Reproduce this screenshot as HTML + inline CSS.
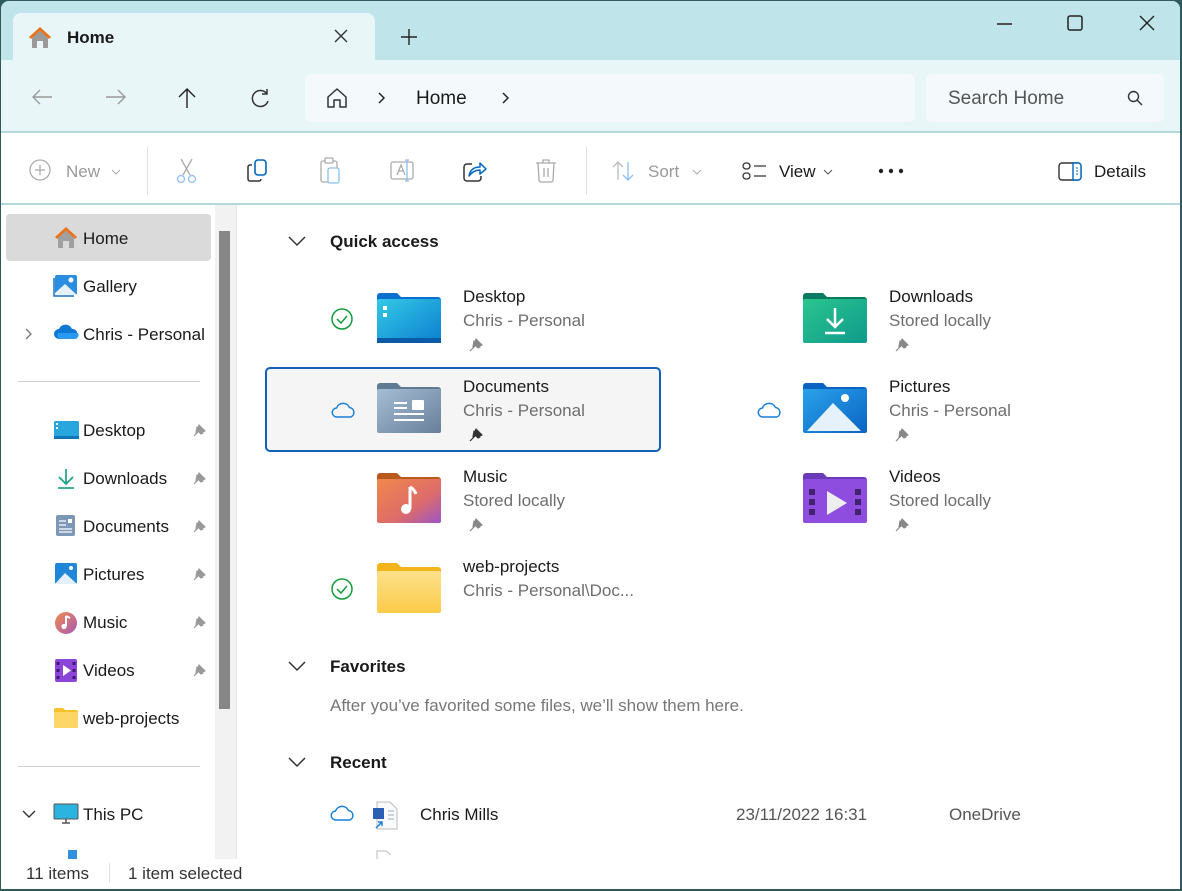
<!DOCTYPE html>
<html><head><meta charset="utf-8"><style>
*{margin:0;padding:0;box-sizing:border-box}
body{width:1182px;height:891px;overflow:hidden;background:#2f5a5e;font-family:"Liberation Sans",sans-serif;color:#1a1a1a;position:relative}
.a{position:absolute}
.win{position:absolute;left:1px;top:1px;width:1179px;height:888px;background:#fff;border-radius:8px 8px 0 0;overflow:hidden}
.t{font-size:17px;white-space:nowrap}
.g{color:#6e6e6e}
.lg{color:#a0a0a0}
svg{position:absolute;overflow:visible}
</style></head><body>
<div class="win">
<!-- title bar -->
<div class="a" style="left:0;top:0;width:1179px;height:59px;background:#bfe5ea"></div>
<div class="a" style="left:12px;top:12px;width:362px;height:48px;background:#e9f6f8;border-radius:8px 8px 0 0"></div>
<svg style="left:26px;top:24px" width="26" height="24"><path d="M13 2 L2 12 L4 14 L13 6 L22 14 L24 12 Z" fill="#e8731c"/><path d="M5 13 L13 6 L21 13 V23 H16 V16 H10 V23 H5Z" fill="#9a9a9a"/></svg>
<div class="a t" style="left:66px;top:27px;font-weight:bold;font-size:17px">Home</div>
<svg style="left:333px;top:28px" width="14" height="14"><path d="M1 1L13 13M13 1L1 13" stroke="#333" stroke-width="1.4"/></svg>
<svg style="left:400px;top:28px" width="16" height="16"><path d="M8 0V16M0 8H16" stroke="#222" stroke-width="1.4"/></svg>
<svg style="left:996px;top:22px" width="16" height="2"><path d="M0 1H15" stroke="#222" stroke-width="1.4"/></svg>
<svg style="left:1066px;top:14px" width="16" height="16"><rect x="1" y="1" width="14" height="14" rx="2" fill="none" stroke="#222" stroke-width="1.5"/></svg>
<svg style="left:1138px;top:14px" width="16" height="16"><path d="M1 1L15 15M15 1L1 15" stroke="#222" stroke-width="1.4"/></svg>
<!-- nav bar -->
<div class="a" style="left:0;top:59px;width:1179px;height:73px;background:#e9f6f8;border-bottom:2px solid #b4d9dd"></div>
<svg style="left:30px;top:87px" width="22" height="18"><path d="M21 9H2M9 2L2 9L9 16" stroke="#999" stroke-width="1.4" fill="none"/></svg>
<svg style="left:104px;top:87px" width="22" height="18"><path d="M1 9H20M13 2L20 9L13 16" stroke="#999" stroke-width="1.4" fill="none"/></svg>
<svg style="left:176px;top:86px" width="20" height="22"><path d="M10 21V2M2 10L10 2L18 10" stroke="#222" stroke-width="1.4" fill="none"/></svg>
<svg style="left:248px;top:87px" width="22" height="20"><path d="M18 6A8 8 0 1 0 19 13M18 1V6H13" stroke="#333" stroke-width="1.5" fill="none"/></svg>
<div class="a" style="left:304px;top:73px;width:610px;height:48px;background:#f4fafb;border-radius:6px"></div>
<svg style="left:325px;top:86px" width="22" height="22"><path d="M2 10L11 2L20 10V20H14V13H8V20H2Z" stroke="#333" stroke-width="1.5" fill="none" stroke-linejoin="round"/></svg>
<svg style="left:377px;top:91px" width="8" height="12"><path d="M1 1L6 6L1 11" stroke="#222" stroke-width="1.5" fill="none"/></svg>
<div class="a t" style="left:415px;top:87px;font-size:19px">Home</div>
<svg style="left:501px;top:91px" width="8" height="12"><path d="M1 1L6 6L1 11" stroke="#222" stroke-width="1.5" fill="none"/></svg>
<div class="a" style="left:925px;top:73px;width:238px;height:48px;background:#f4fafb;border-radius:6px"></div>
<div class="a t g" style="left:947px;top:87px;font-size:19px;color:#555">Search Home</div>
<svg style="left:1126px;top:89px" width="16" height="16"><circle cx="6.5" cy="6.5" r="5" fill="none" stroke="#333" stroke-width="1.4"/><path d="M10 10L15 15" stroke="#333" stroke-width="1.4"/></svg>
<!-- toolbar -->
<div class="a" style="left:0;top:202px;width:1179px;height:2px;background:#b4d9dd"></div>
<svg style="left:28px;top:158px" width="24" height="24"><circle cx="11" cy="11" r="10" fill="none" stroke="#aaa" stroke-width="1.3"/><path d="M11 6V16M6 11H16" stroke="#aaa" stroke-width="1.3"/></svg>
<div class="a t lg" style="left:65px;top:161px;color:#999">New</div>
<svg style="left:110px;top:168px" width="10" height="6"><path d="M1 1L5 5L9 1" stroke="#aaa" fill="none"/></svg>
<div class="a" style="left:146px;top:146px;width:1px;height:48px;background:#e2e2e2"></div>
<svg style="left:175px;top:157px" width="22" height="26"><path d="M5 1L14 17M16 1L7 17" stroke="#aaa" stroke-width="1.3"/><circle cx="5" cy="21" r="3.5" fill="none" stroke="#8cbff0" stroke-width="1.3"/><circle cx="16" cy="21" r="3.5" fill="none" stroke="#8cbff0" stroke-width="1.3"/></svg>
<svg style="left:246px;top:158px" width="24" height="24"><path d="M5 6H3A2 2 0 0 0 1 8V20A2 2 0 0 0 3 22H12A2 2 0 0 0 14 20" stroke="#333" stroke-width="1.5" fill="none"/><rect x="8" y="1" width="11" height="15" rx="3" fill="none" stroke="#0067c0" stroke-width="1.6"/></svg>
<svg style="left:318px;top:156px" width="24" height="28"><rect x="2" y="4" width="16" height="21" rx="2" fill="none" stroke="#aaa" stroke-width="1.3"/><rect x="6" y="1" width="8" height="5" rx="1" fill="#fff" stroke="#aaa" stroke-width="1.3"/><rect x="9" y="11" width="11" height="15" rx="2" fill="#fff" stroke="#8cbff0" stroke-width="1.3"/></svg>
<svg style="left:389px;top:158px" width="26" height="24"><rect x="1" y="3" width="22" height="17" rx="2" fill="none" stroke="#aaa" stroke-width="1.3"/><path d="M7 16L11 6L15 16M8.5 12H13.5" stroke="#aaa" stroke-width="1.3" fill="none"/><path d="M17 1V22M15 1H19M15 22H19" stroke="#8cbff0" stroke-width="1.3"/></svg>
<svg style="left:462px;top:158px" width="26" height="24"><path d="M9 5H4A3 3 0 0 0 1 8V19A3 3 0 0 0 4 22H15A3 3 0 0 0 18 19V17" stroke="#333" stroke-width="1.5" fill="none"/><path d="M6 17C7 11 11 8 17 8V4L23 10L17 15V11C13 11 9 13 6 17Z" fill="#fff" stroke="#0067c0" stroke-width="1.5" stroke-linejoin="round"/></svg>
<svg style="left:534px;top:158px" width="22" height="24"><path d="M1 4H21M8 4V1H14V4M3 4L4 21A2 2 0 0 0 6 23H16A2 2 0 0 0 18 21L19 4M9 9V18M13 9V18" stroke="#aaa" stroke-width="1.3" fill="none"/></svg>
<div class="a" style="left:585px;top:146px;width:1px;height:48px;background:#e2e2e2"></div>
<svg style="left:611px;top:160px" width="24" height="20"><path d="M6 19V1M1 6L6 1L11 6" stroke="#bbb" stroke-width="1.3" fill="none"/><path d="M16 1V19M11 14L16 19L21 14" stroke="#8cbff0" stroke-width="1.3" fill="none"/></svg>
<div class="a t" style="left:647px;top:161px;color:#999">Sort</div>
<svg style="left:691px;top:168px" width="10" height="6"><path d="M1 1L5 5L9 1" stroke="#aaa" fill="none"/></svg>
<svg style="left:741px;top:161px" width="26" height="20"><rect x="1" y="1" width="7" height="6" rx="3" fill="none" stroke="#333" stroke-width="1.3"/><rect x="1" y="11" width="7" height="6" rx="3" fill="none" stroke="#333" stroke-width="1.3"/><path d="M12 4H24M12 14H24" stroke="#333" stroke-width="1.3"/></svg>
<div class="a t" style="left:778px;top:161px">View</div>
<svg style="left:822px;top:168px" width="10" height="6"><path d="M1 1L5 5L9 1" stroke="#555" fill="none"/></svg>
<svg style="left:877px;top:167px" width="28" height="6"><circle cx="3" cy="3" r="2.2" fill="#222"/><circle cx="13" cy="3" r="2.2" fill="#222"/><circle cx="23" cy="3" r="2.2" fill="#222"/></svg>
<svg style="left:1057px;top:161px" width="26" height="20"><rect x="1" y="1" width="22" height="17" rx="3" fill="none" stroke="#333" stroke-width="1.4"/><path d="M15 1H20A3 3 0 0 1 23 4V15A3 3 0 0 1 20 18H15Z" fill="#fff" stroke="#0067c0" stroke-width="1.4"/><path d="M18 6H20M18 9H20M18 12H20" stroke="#0067c0"/></svg>
<div class="a t" style="left:1093px;top:161px">Details</div>
<!-- sidebar -->
<div class="a" style="left:214px;top:204px;width:22px;height:654px;background:#f2f2f2;border-right:1px solid #e6e6e6"></div>
<div class="a" style="left:218px;top:230px;width:11px;height:478px;background:#868686"></div>
<div class="a" style="left:5px;top:213px;width:205px;height:47px;background:#dadada;border-radius:4px"></div>
<svg style="left:52px;top:224px" width="26" height="24"><path d="M13 2 L2 12 L4 14 L13 6 L22 14 L24 12 Z" fill="#e8731c"/><path d="M5 13 L13 6 L21 13 V23 H16 V16 H10 V23 H5Z" fill="#a0a0a0"/></svg>
<div class="a t" style="left:82px;top:228px">Home</div>
<svg style="left:52px;top:272px" width="26" height="24"><rect x="2" y="2" width="22" height="20" rx="2" fill="#2b8de0"/><path d="M2 20L12 11L24 22H2Z" fill="#e6f1fb"/><circle cx="18" cy="7" r="2.5" fill="#fff"/><path d="M1 5V23H21" stroke="#1a6fbf" stroke-width="1.5" fill="none"/></svg>
<div class="a t" style="left:82px;top:276px">Gallery</div>
<svg style="left:24px;top:327px" width="8" height="12"><path d="M1 1L6 6L1 11" stroke="#777" stroke-width="1.3" fill="none"/></svg>
<svg style="left:52px;top:322px" width="26" height="18"><path d="M6 16A5 5 0 0 1 6 6 7 7 0 0 1 19 6 5 5 0 0 1 20 16Z" fill="#0f78d4"/><path d="M6 16A5 5 0 0 1 5 10H25A4 4 0 0 1 21 16Z" fill="#2a9af0"/></svg>
<div class="a t" style="left:82px;top:324px">Chris - Personal</div>
<div class="a" style="left:17px;top:380px;width:182px;height:1px;background:#d0d0d0"></div>
<div class="a" style="left:17px;top:765px;width:182px;height:1px;background:#d0d0d0"></div>
<svg style="left:53px;top:420px" width="25" height="18"><rect x="0" y="0" width="25" height="17" rx="1.5" fill="#29a6dd"/><rect x="0" y="15" width="25" height="3" fill="#1077b8"/><rect x="2" y="2" width="2" height="2" fill="#fff"/><rect x="2" y="6" width="2" height="2" fill="#fff"/></svg>
<div class="a t" style="left:82px;top:420px">Desktop</div>
<svg style="left:55px;top:467px" width="20" height="22"><path d="M10 1V15M3 9L10 16L17 9" stroke="#1aa38a" stroke-width="1.7" fill="none"/><path d="M2 20H18" stroke="#1aa38a" stroke-width="1.7"/></svg>
<div class="a t" style="left:82px;top:468px">Downloads</div>
<svg style="left:55px;top:514px" width="20" height="22"><rect x="0" y="0" width="19" height="21" rx="2" fill="#7d97b6"/><path d="M3 6H10M3 10H10M3 14H16M3 17H16" stroke="#fff" stroke-width="1.3"/><rect x="12" y="4" width="4" height="4" fill="#fff"/></svg>
<div class="a t" style="left:82px;top:516px">Documents</div>
<svg style="left:54px;top:562px" width="22" height="22"><rect x="0" y="0" width="22" height="21" rx="2" fill="#1f86d8"/><path d="M0 21L10 10L22 21Z" fill="#e4f0fb"/><circle cx="16" cy="5" r="2" fill="#fff"/></svg>
<div class="a t" style="left:82px;top:564px">Pictures</div>
<svg style="left:53px;top:610px" width="24" height="24"><defs><linearGradient id="mg" x1="0" y1="0" x2="1" y2="1"><stop offset="0" stop-color="#f08a4c"/><stop offset="1" stop-color="#a85bb8"/></linearGradient></defs><circle cx="12" cy="12" r="11" fill="url(#mg)"/><path d="M12 5V15" stroke="#fff" stroke-width="2"/><circle cx="10" cy="15.5" r="2.6" fill="#fff"/><path d="M12 5L16 7" stroke="#fff" stroke-width="2"/></svg>
<div class="a t" style="left:82px;top:612px">Music</div>
<svg style="left:54px;top:658px" width="22" height="24"><rect x="0" y="0" width="22" height="23" rx="2" fill="#8c45d9"/><path d="M8 6L16 11.5L8 17Z" fill="#fff"/><rect x="1.5" y="3" width="3" height="3" fill="#3d1a6b"/><rect x="1.5" y="10" width="3" height="3" fill="#3d1a6b"/><rect x="1.5" y="17" width="3" height="3" fill="#3d1a6b"/><rect x="17.5" y="3" width="3" height="3" fill="#3d1a6b"/><rect x="17.5" y="10" width="3" height="3" fill="#3d1a6b"/><rect x="17.5" y="17" width="3" height="3" fill="#3d1a6b"/></svg>
<div class="a t" style="left:82px;top:660px">Videos</div>
<svg style="left:53px;top:707px" width="24" height="20"><path d="M0 2A2 2 0 0 1 2 0H9L11 2H22A2 2 0 0 1 24 4V18A2 2 0 0 1 22 20H2A2 2 0 0 1 0 18Z" fill="#f6c02a"/><rect x="0" y="4" width="24" height="16" rx="1.5" fill="#fcd768"/></svg>
<div class="a t" style="left:82px;top:708px">web-projects</div>
<!-- sidebar pins -->
<svg style="left:189px;top:421px" width="18" height="18"><path d="M4 14L8 10M7 5L13 11L11 12L8 9L6 11Z M9 3L15 9L12 10L8 6Z" fill="#999" stroke="#999" stroke-width="1.2" stroke-linejoin="round"/></svg>
<svg style="left:189px;top:469px" width="18" height="18"><path d="M4 14L8 10M7 5L13 11L11 12L8 9L6 11Z M9 3L15 9L12 10L8 6Z" fill="#999" stroke="#999" stroke-width="1.2" stroke-linejoin="round"/></svg>
<svg style="left:189px;top:517px" width="18" height="18"><path d="M4 14L8 10M7 5L13 11L11 12L8 9L6 11Z M9 3L15 9L12 10L8 6Z" fill="#999" stroke="#999" stroke-width="1.2" stroke-linejoin="round"/></svg>
<svg style="left:189px;top:565px" width="18" height="18"><path d="M4 14L8 10M7 5L13 11L11 12L8 9L6 11Z M9 3L15 9L12 10L8 6Z" fill="#999" stroke="#999" stroke-width="1.2" stroke-linejoin="round"/></svg>
<svg style="left:189px;top:613px" width="18" height="18"><path d="M4 14L8 10M7 5L13 11L11 12L8 9L6 11Z M9 3L15 9L12 10L8 6Z" fill="#999" stroke="#999" stroke-width="1.2" stroke-linejoin="round"/></svg>
<svg style="left:189px;top:661px" width="18" height="18"><path d="M4 14L8 10M7 5L13 11L11 12L8 9L6 11Z M9 3L15 9L12 10L8 6Z" fill="#999" stroke="#999" stroke-width="1.2" stroke-linejoin="round"/></svg>
<svg style="left:21px;top:809px" width="14" height="8"><path d="M1 1L7 7L13 1" stroke="#333" stroke-width="1.4" fill="none"/></svg>
<svg style="left:53px;top:803px" width="24" height="20"><rect x="0" y="0" width="24" height="15" rx="1" fill="#2bb4e0" stroke="#555" stroke-width="1"/><path d="M8 19H16M12 15V19" stroke="#555" stroke-width="1.5"/></svg>
<div class="a t" style="left:82px;top:804px">This PC</div>
<div class="a" style="left:67px;top:849px;width:9px;height:9px;background:#2f8fe0"></div>
<!-- status bar -->
<div class="a" style="left:0;top:858px;width:1179px;height:30px;background:#fff"></div>
<div class="a t" style="left:25px;top:863px;color:#333">11 items</div>
<div class="a" style="left:108px;top:862px;width:1px;height:20px;background:#e0e0e0"></div>
<div class="a t" style="left:127px;top:863px;color:#333">1 item selected</div>
<!-- content -->
<svg style="left:287px;top:235px" width="18" height="10"><path d="M1 1L9 9L17 1" stroke="#333" stroke-width="1.5" fill="none"/></svg>
<div class="a t" style="left:329px;top:231px;font-weight:bold;font-size:17px">Quick access</div>
<!-- Desktop -->
<svg style="left:330px;top:307px" width="24" height="24"><circle cx="11" cy="11" r="10" fill="none" stroke="#139c3a" stroke-width="1.5"/><path d="M6 11L10 15L16 8" stroke="#139c3a" stroke-width="1.5" fill="none"/></svg>
<svg style="left:376px;top:292px" width="64" height="50"><path d="M0 3A3 3 0 0 1 3 0H20L24 4H61A3 3 0 0 1 64 7V12H0Z" fill="#0a6fcd"/><defs><linearGradient id="dg" x1="0" y1="0" x2="1" y2="1"><stop offset="0" stop-color="#33c9e6"/><stop offset="1" stop-color="#0c7ed0"/></linearGradient></defs><rect x="0" y="6" width="64" height="44" rx="2" fill="url(#dg)"/><rect x="0" y="45" width="64" height="5" fill="#0b5aa8"/><rect x="6" y="13" width="4" height="4" fill="#fff"/><rect x="6" y="20" width="4" height="4" fill="#fff"/></svg>
<div class="a t" style="left:462px;top:286px">Desktop</div>
<div class="a t g" style="left:462px;top:310px">Chris - Personal</div>
<svg style="left:466px;top:335px" width="18" height="18"><path d="M3 15L8 10M7 5L13 11L11 12L8 9L6 11Z M9 3L15 9L12 10L8 6Z" fill="#888" stroke="#888" stroke-width="1.2" stroke-linejoin="round"/></svg>
<!-- Documents selected -->
<div class="a" style="left:264px;top:366px;width:396px;height:85px;background:#f5f5f5;border:2px solid #0f62b8;border-radius:5px"></div>
<svg style="left:330px;top:400px" width="26" height="18"><path d="M6 16A4.5 4.5 0 0 1 5.5 7 7 7 0 0 1 18.5 6.5 5 5 0 0 1 20 16Z" fill="none" stroke="#1a7fd6" stroke-width="1.5" stroke-linejoin="round"/></svg>
<svg style="left:376px;top:382px" width="64" height="50"><path d="M0 3A3 3 0 0 1 3 0H20L24 4H61A3 3 0 0 1 64 7V12H0Z" fill="#5f7a92"/><defs><linearGradient id="docg" x1="0" y1="0" x2="1" y2="1"><stop offset="0" stop-color="#a6bdd6"/><stop offset="1" stop-color="#687f99"/></linearGradient></defs><rect x="0" y="6" width="64" height="44" rx="2" fill="url(#docg)"/><path d="M17 20H30M17 25H30M17 31H47M17 37H47" stroke="#fff" stroke-width="2"/><rect x="35" y="17" width="12" height="10" rx="1" fill="#fff"/></svg>
<div class="a t" style="left:462px;top:376px">Documents</div>
<div class="a t g" style="left:462px;top:400px">Chris - Personal</div>
<svg style="left:466px;top:425px" width="18" height="18"><path d="M3 15L8 10M7 5L13 11L11 12L8 9L6 11Z M9 3L15 9L12 10L8 6Z" fill="#333" stroke="#333" stroke-width="1.2" stroke-linejoin="round"/></svg>
<!-- Music -->
<svg style="left:376px;top:472px" width="64" height="50"><path d="M0 3A3 3 0 0 1 3 0H20L24 4H61A3 3 0 0 1 64 7V12H0Z" fill="#b85a1c"/><defs><linearGradient id="mug" x1="0" y1="0" x2="1" y2="1"><stop offset="0" stop-color="#f0884a"/><stop offset="0.6" stop-color="#dd6c6a"/><stop offset="1" stop-color="#9d55c4"/></linearGradient></defs><rect x="0" y="6" width="64" height="44" rx="2" fill="url(#mug)"/><path d="M33 14V36" stroke="#fff" stroke-width="3"/><circle cx="29" cy="36" r="5" fill="#fff"/><path d="M33 14Q37 16 39 21" stroke="#fff" stroke-width="3" fill="none"/></svg>
<div class="a t" style="left:462px;top:466px">Music</div>
<div class="a t g" style="left:462px;top:490px">Stored locally</div>
<svg style="left:466px;top:515px" width="18" height="18"><path d="M3 15L8 10M7 5L13 11L11 12L8 9L6 11Z M9 3L15 9L12 10L8 6Z" fill="#888" stroke="#888" stroke-width="1.2" stroke-linejoin="round"/></svg>
<!-- web-projects -->
<svg style="left:330px;top:577px" width="24" height="24"><circle cx="11" cy="11" r="10" fill="none" stroke="#139c3a" stroke-width="1.5"/><path d="M6 11L10 15L16 8" stroke="#139c3a" stroke-width="1.5" fill="none"/></svg>
<svg style="left:376px;top:562px" width="64" height="50"><path d="M0 3A3 3 0 0 1 3 0H20L24 4H61A3 3 0 0 1 64 7V12H0Z" fill="#f4b51c"/><defs><linearGradient id="yg" x1="0" y1="0" x2="0" y2="1"><stop offset="0" stop-color="#fde18a"/><stop offset="1" stop-color="#fbcc4a"/></linearGradient></defs><rect x="0" y="8" width="64" height="42" rx="2" fill="url(#yg)"/></svg>
<div class="a t" style="left:462px;top:556px">web-projects</div>
<div class="a t g" style="left:462px;top:580px">Chris - Personal\Doc...</div>
<!-- Downloads -->
<svg style="left:802px;top:292px" width="64" height="50"><path d="M0 3A3 3 0 0 1 3 0H20L24 4H61A3 3 0 0 1 64 7V12H0Z" fill="#0d7a5f"/><defs><linearGradient id="dlg" x1="0" y1="0" x2="1" y2="1"><stop offset="0" stop-color="#2ac58e"/><stop offset="1" stop-color="#0f9a8c"/></linearGradient></defs><rect x="0" y="6" width="64" height="44" rx="2" fill="url(#dlg)"/><path d="M32 15V34M24 26L32 34L40 26" stroke="#fff" stroke-width="2.5" fill="none"/><path d="M22 40H42" stroke="#fff" stroke-width="2.5"/></svg>
<div class="a t" style="left:888px;top:286px">Downloads</div>
<div class="a t g" style="left:888px;top:310px">Stored locally</div>
<svg style="left:892px;top:335px" width="18" height="18"><path d="M3 15L8 10M7 5L13 11L11 12L8 9L6 11Z M9 3L15 9L12 10L8 6Z" fill="#888" stroke="#888" stroke-width="1.2" stroke-linejoin="round"/></svg>
<!-- Pictures -->
<svg style="left:756px;top:400px" width="26" height="18"><path d="M6 16A4.5 4.5 0 0 1 5.5 7 7 7 0 0 1 18.5 6.5 5 5 0 0 1 20 16Z" fill="none" stroke="#1a7fd6" stroke-width="1.5" stroke-linejoin="round"/></svg>
<svg style="left:802px;top:382px" width="64" height="50"><path d="M0 3A3 3 0 0 1 3 0H20L24 4H61A3 3 0 0 1 64 7V12H0Z" fill="#0b62c0"/><defs><linearGradient id="pg" x1="0" y1="0" x2="1" y2="1"><stop offset="0" stop-color="#2aa2ea"/><stop offset="1" stop-color="#0a63c4"/></linearGradient></defs><rect x="0" y="6" width="64" height="44" rx="2" fill="url(#pg)"/><path d="M4 48L30 20L58 48Z" fill="#e6f2fb"/><circle cx="42" cy="15" r="4" fill="#fff"/></svg>
<div class="a t" style="left:888px;top:376px">Pictures</div>
<div class="a t g" style="left:888px;top:400px">Chris - Personal</div>
<svg style="left:892px;top:425px" width="18" height="18"><path d="M3 15L8 10M7 5L13 11L11 12L8 9L6 11Z M9 3L15 9L12 10L8 6Z" fill="#888" stroke="#888" stroke-width="1.2" stroke-linejoin="round"/></svg>
<!-- Videos -->
<svg style="left:802px;top:472px" width="64" height="50"><path d="M0 3A3 3 0 0 1 3 0H20L24 4H61A3 3 0 0 1 64 7V12H0Z" fill="#6b3ab8"/><rect x="0" y="6" width="64" height="44" rx="2" fill="#8f4ddf"/><path d="M24 18L44 30L24 42Z" fill="#eee"/><g fill="#43226f"><rect x="6" y="16" width="6" height="6"/><rect x="6" y="26" width="6" height="6"/><rect x="6" y="36" width="6" height="6"/><rect x="52" y="16" width="6" height="6"/><rect x="52" y="26" width="6" height="6"/><rect x="52" y="36" width="6" height="6"/></g></svg>
<div class="a t" style="left:888px;top:466px">Videos</div>
<div class="a t g" style="left:888px;top:490px">Stored locally</div>
<svg style="left:892px;top:515px" width="18" height="18"><path d="M3 15L8 10M7 5L13 11L11 12L8 9L6 11Z M9 3L15 9L12 10L8 6Z" fill="#888" stroke="#888" stroke-width="1.2" stroke-linejoin="round"/></svg>
<!-- Favorites -->
<svg style="left:287px;top:660px" width="18" height="10"><path d="M1 1L9 9L17 1" stroke="#333" stroke-width="1.5" fill="none"/></svg>
<div class="a t" style="left:329px;top:656px;font-weight:bold">Favorites</div>
<div class="a t" style="left:329px;top:695px;color:#777">After you’ve favorited some files, we’ll show them here.</div>
<!-- Recent -->
<svg style="left:287px;top:756px" width="18" height="10"><path d="M1 1L9 9L17 1" stroke="#333" stroke-width="1.5" fill="none"/></svg>
<div class="a t" style="left:329px;top:752px;font-weight:bold">Recent</div>
<svg style="left:329px;top:803px" width="26" height="18"><path d="M6 16A4.5 4.5 0 0 1 5.5 7 7 7 0 0 1 18.5 6.5 5 5 0 0 1 20 16Z" fill="none" stroke="#1a7fd6" stroke-width="1.5" stroke-linejoin="round"/></svg>
<svg style="left:372px;top:800px" width="26" height="30"><path d="M4 1H17L24 8V28H4Z" fill="#fafafa" stroke="#bbb"/><rect x="0" y="7" width="11" height="11" fill="#2b5fb4"/><path d="M15 10H21M15 14H21M15 18H21" stroke="#9ab"/><path d="M3 27L9 21M5 21H9V25" stroke="#1a7fd6" stroke-width="1.5" fill="none"/></svg>
<div class="a t" style="left:419px;top:804px">Chris Mills</div>
<div class="a t" style="left:735px;top:804px;color:#555">23/11/2022 16:31</div>
<div class="a t" style="left:948px;top:804px;color:#555">OneDrive</div>
<svg style="left:375px;top:849px" width="16" height="9"><path d="M1 9V1H10L15 5" stroke="#bbb" fill="none"/></svg>
</div>
</body></html>
